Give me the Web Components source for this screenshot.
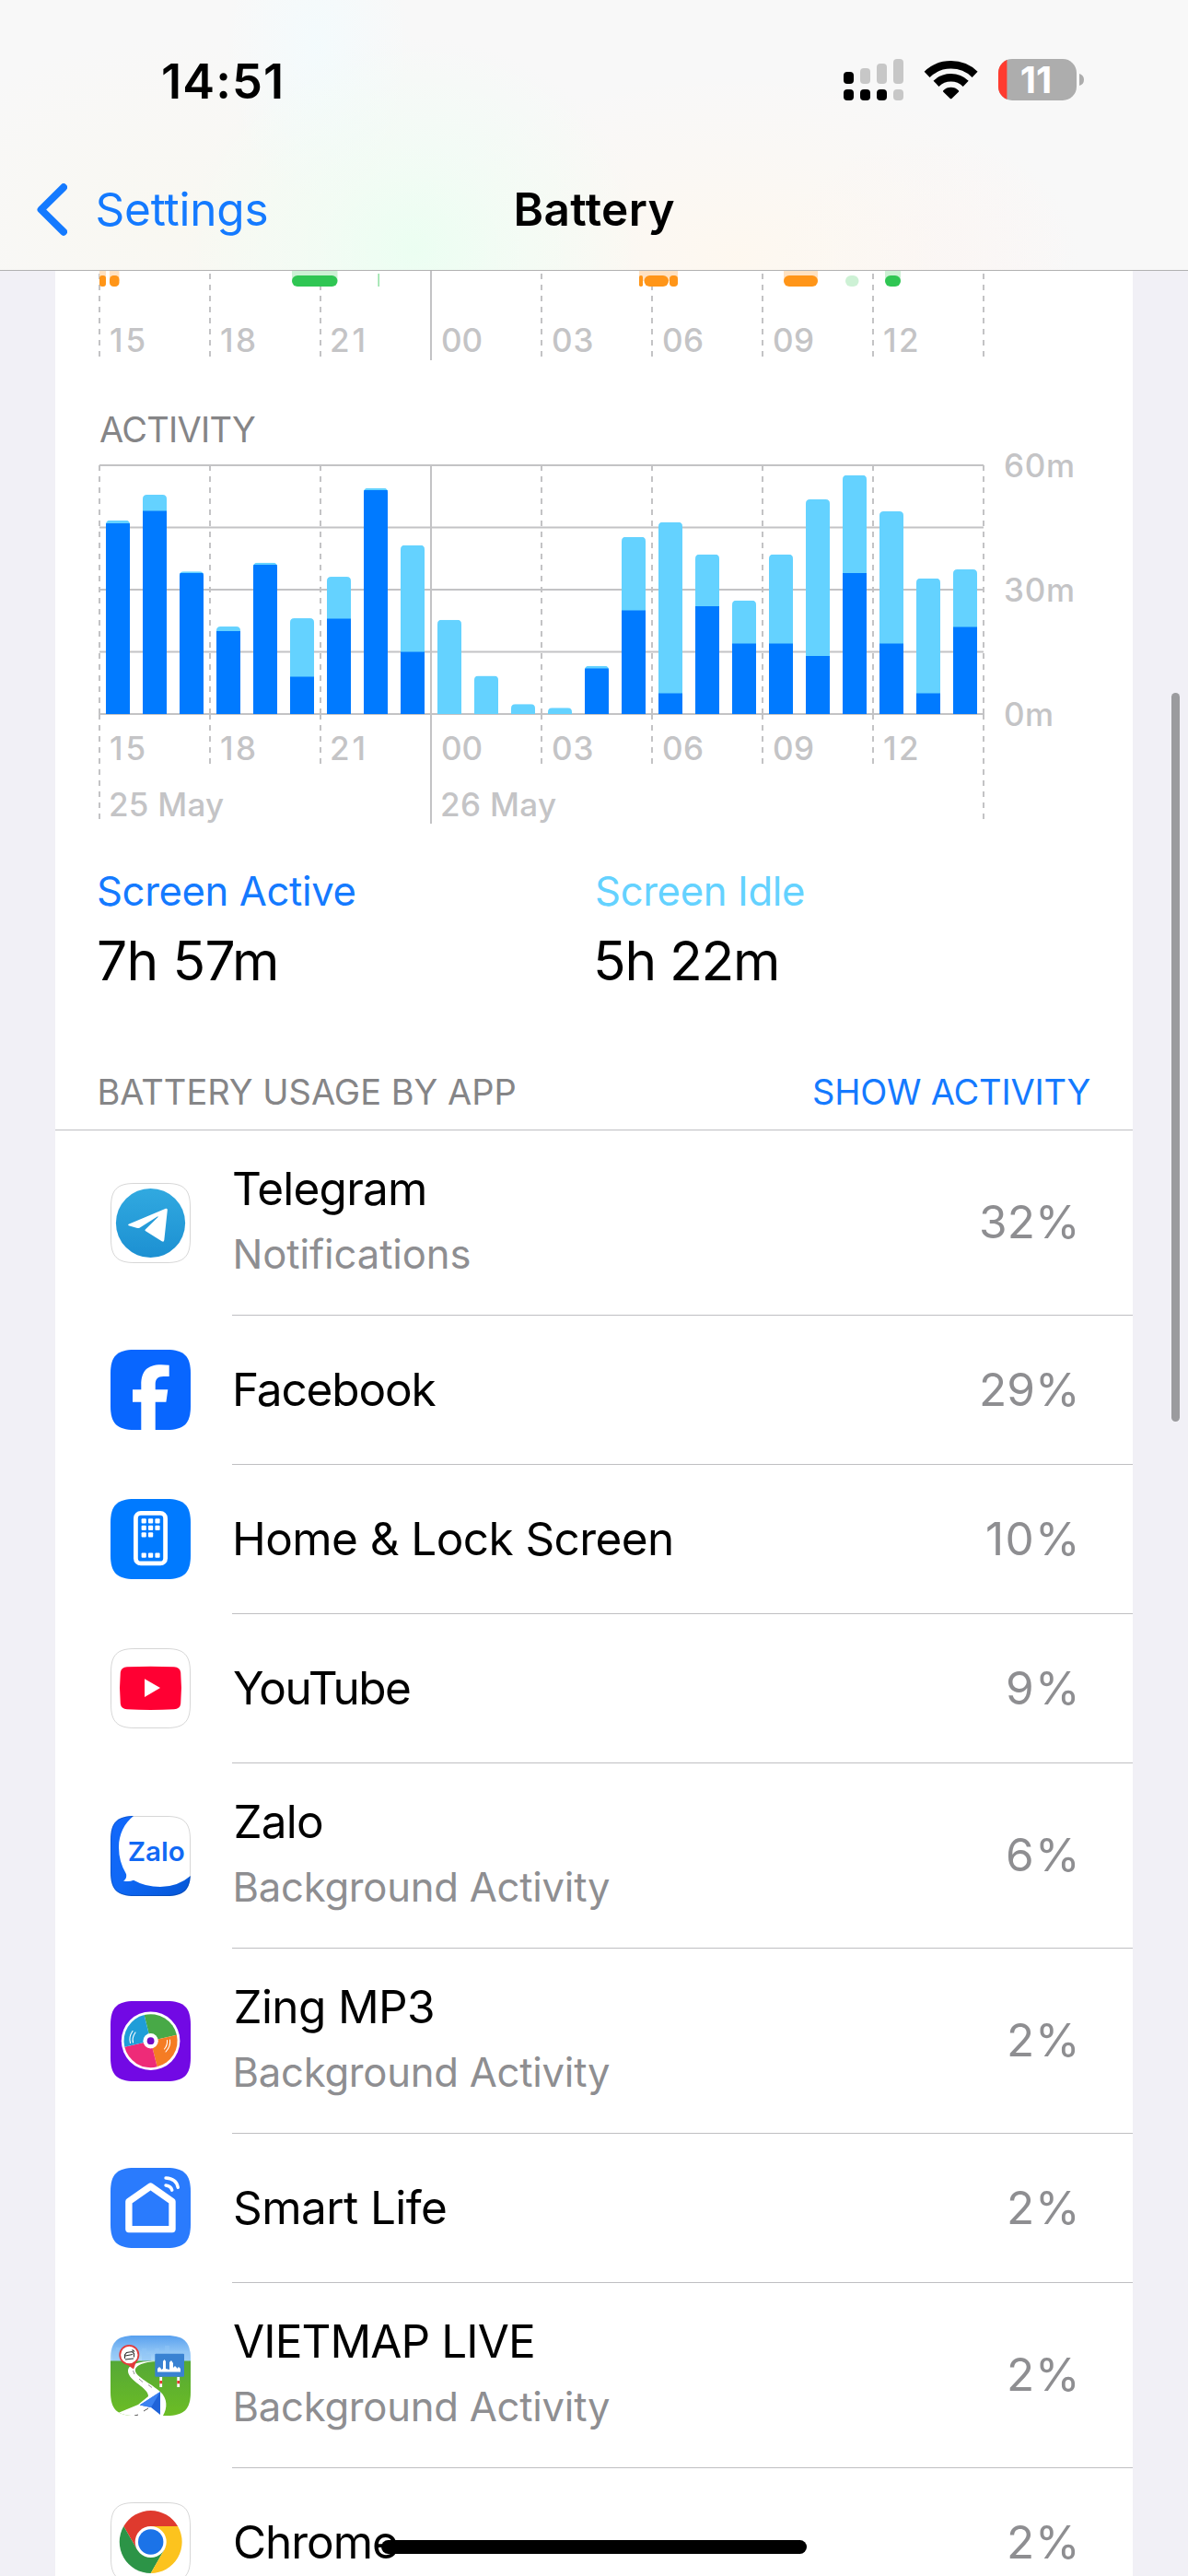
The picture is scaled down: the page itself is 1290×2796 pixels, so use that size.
<!DOCTYPE html>
<html lang="en">
<head>
<meta charset="utf-8">
<title>Battery</title>
<style>
html,body{margin:0;padding:0}
body{width:1290px;height:2796px;overflow:hidden;background:#f1f0f6;font-family:Inter,"Liberation Sans",sans-serif;color:#000}
</style>
</head>
<body>
<battery-screen></battery-screen>
<script>
const FAMILY = 'Inter, "Liberation Sans", sans-serif';
const ctx = document.createElement('canvas').getContext('2d');

// Tracking that makes the visible ink of a string exactly `width` px wide.
function track(text, size, weight, width) {
  ctx.font = `${weight} ${size}px ${FAMILY}`;
  const m = ctx.measureText(text);
  const ink = m.actualBoundingBoxRight + m.actualBoundingBoxLeft;
  const n = [...text].length - 1;
  return {
    spacing: width && n ? (width - ink) / n : 0,
    left: m.actualBoundingBoxLeft,
    right: m.width - m.actualBoundingBoxRight
  };
}

class UiLabel extends HTMLElement {
  connectedCallback() {
    const size = +this.getAttribute('size') || 49.5;
    const weight = this.getAttribute('weight') || 400;
    const line = this.getAttribute('line') || 72;
    const t = track(this.textContent, size, weight, +this.getAttribute('ink'));
    const root = this.shadowRoot || this.attachShadow({mode: 'open'});
    root.innerHTML = `<style>
      :host{display:block;flex:none;white-space:nowrap}
      span{display:block;font-size:${size}px;font-weight:${weight};line-height:${line}px;letter-spacing:${t.spacing}px;
        margin-left:${t.left}px;margin-right:${-t.spacing - t.right}px}
    </style><span><slot></slot></span>`;
  }
}
customElements.define('ui-label', UiLabel);

class StatusBar extends HTMLElement {
  connectedCallback() {
    this.attachShadow({mode: 'open'}).innerHTML = `<style>
      :host{display:flex;align-items:center;justify-content:space-between;height:176px;padding:0 113px 0 177px}
      svg{display:block;overflow:visible;margin-top:-3px}
    </style>
    <ui-label size="52.3" weight="600" ink="128">14:51</ui-label>
    <svg width="262" height="66" viewBox="915 54 262 66">
      <g fill="#c7c7c7"><rect x="934" y="74" width="11" height="17" rx="4"/><rect x="952" y="69" width="11" height="22" rx="4"/><rect x="970" y="64" width="11" height="27" rx="4"/><rect x="970" y="97" width="11" height="12" rx="4"/></g>
      <g><rect x="916" y="78" width="11" height="13" rx="4"/><rect x="916" y="97" width="11" height="12" rx="4"/><rect x="934" y="97" width="11" height="12" rx="4"/><rect x="952" y="97" width="11" height="12" rx="4"/></g>
      <g fill="none" stroke="#000" stroke-width="8.6"><path d="M1006.6 80.8a37.5 37.5 0 0 1 52 0"/><path d="M1016.5 90.8a23.2 23.2 0 0 1 32.2 0"/></g>
      <path d="M1024.3 98.2a12 12 0 0 1 16.6 0q.8.8 0 1.6l-7.2 6.9q-1.1 1-2.2 0l-7.2-6.9q-.8-.8 0-1.6z"/>
      <clipPath id="b"><rect x="1084" y="64" width="85" height="45" rx="15"/></clipPath>
      <g clip-path="url(#b)"><rect x="1084" y="64" width="85" height="45" fill="#adadad"/><rect x="1084" y="64" width="9.4" height="45" fill="#ff3b2f"/></g>
      <path d="M1172 80q5 1.5 5 6.5t-5 6.5z" fill="#adadad"/>
      <text x="1125" y="101" text-anchor="middle" font-size="40" font-weight="700" fill="#fff">11</text>
    </svg>`;
  }
}
customElements.define('status-bar', StatusBar);

class NavBar extends HTMLElement {
  connectedCallback() {
    this.attachShadow({mode: 'open'}).innerHTML = `<style>
      :host{display:grid;grid-template-columns:1fr auto 1fr;align-items:center;height:102px;padding:0 38px 15px 40px;border-bottom:1px solid #b1b1b1}
      .back{display:flex;align-items:center;gap:32.5px;color:#147aff}
      svg{display:block}
      .title{padding-left:1px}
    </style>
    <div class="back"><svg width="33" height="57" viewBox="0 0 33 57"><path d="M29 4.3 4.6 28.5 29 52.7" fill="none" stroke="#147aff" stroke-width="8" stroke-linecap="round" stroke-linejoin="round"/></svg><ui-label ink="184">Settings</ui-label></div>
    <ui-label class="title" weight="600" ink="172">Battery</ui-label>`;
  }
}
customElements.define('nav-bar', NavBar);

const X0 = 48, STEP = 120, HOURS = ['15','18','21','00','03','06','09','12'];
const GREY = '#c3c3c5';
function axisText(s, x, y, ink) {
  const t = track(s, 35, 500, ink);
  return `<text x="${x + t.left}" y="${y}" font-size="35" font-weight="500" fill="#c4c4c6" letter-spacing="${t.spacing}">${s}</text>`;
}
const vline = (x, a, b, solid) => `<path d="M${x} ${a}V${b}" stroke="${GREY}" stroke-width="2"${solid ? '' : ' stroke-dasharray="6 6"'}/>`;
const INKS = {'15':36.5,'18':37,'21':34.5,'00':42.5,'03':42.5,'06':43,'09':43,'12':36};

// Lower edge of the battery-level chart: charging pills and hour labels.
class LevelChart extends HTMLElement {
  connectedCallback() {
    let s = '';
    for (let i = 0; i < 9; i++) s += i === 3 ? vline(X0 + STEP*i, 0, 97, true) : vline(X0 + STEP*i, 3, 93);
    const o = '#ff9518', g = '#2fc653', po = '#ffe2c2', pg = '#cdf1d5';
    const shade = [[48,7,po],[59,10.5,po],[257,49.5,pg],[634,42,po],[791,37,po],[901,17,pg]];
    const pill = [[48,7,o],[59,10.5,o],[257,49.5,g],[634,4,o],[639.5,26.5,o],[667,9,o],[791,37,o],[858,14.5,pg],[901,17,g]];
    for (const [x,w,c] of shade) s += `<rect x="${x}" y="0" width="${w}" height="11" fill="${c}"/>`;
    for (const [x,w,c] of pill) s += `<rect x="${x}" y="5" width="${w}" height="12" rx="${Math.min(6,w/2.4)}" fill="${c}"/>`;
    s += `<rect x="350.5" y="3" width="1.3" height="14" fill="#7fdc95"/>`;
    HOURS.forEach((h,i) => s += axisText(h, X0 + STEP*i + 12, 87.6, INKS[h]));
    this.attachShadow({mode:'open'}).innerHTML = `<style>:host{display:block;height:97px}svg{display:block}</style><svg width="1170" height="97">${s}</svg>`;
  }
}
customElements.define('level-chart', LevelChart);

// Minutes per hour: [screen on + idle, screen on]
const ACTIVITY = [[46.7,46],[52.9,49],[34.4,34],[21.1,20],[36.5,36],[23.1,9],[33.1,23],[54.5,54],[40.7,15],[22.7,0],[9.2,0],[2.4,0],[1.5,0],[11.6,11],[42.7,25],[46.3,5],[38.5,26],[27.4,17],[38.5,17],[51.8,14],[57.6,34],[48.9,17],[32.7,5],[34.9,21]];
class ActivityChart extends HTMLElement {
  connectedCallback() {
    const top = 16, base = 286, px = 4.5;
    let s = '';
    for (let i = 0; i < 5; i++) s += `<path d="M48 ${top + 67.5*i}H1008" stroke="${GREY}" stroke-width="1.8"/>`;
    for (let i = 0; i < 9; i++) {
      const x = X0 + STEP*i;
      s += i === 3 ? vline(x, top, 405, true) : vline(x, top, base) + vline(x, base, i % 8 ? 341 : 401);
    }
    ACTIVITY.forEach(([t,a],i) => {
      const x = 55 + 40*i, h = t*px, r = Math.min(4.5, h), y = base - h;
      s += `<clipPath id="c${i}"><path d="M${x} ${base}V${y+r}q0 ${-r} ${r} ${-r}h${26-2*r}q${r} 0 ${r} ${r}V${base}z"/></clipPath>
        <g clip-path="url(#c${i})"><rect x="${x}" y="${y}" width="26" height="${h}" fill="#64d2ff"/><rect x="${x}" y="${base-a*px}" width="26" height="${a*px}" fill="#007aff"/></g>`;
    });
    HOURS.forEach((h,i) => s += axisText(h, X0 + STEP*i + 12, 335.8, INKS[h]));
    s += axisText('25 May', 60, 397, 123) + axisText('26 May', 420, 397, 124);
    s += axisText('60m', 1031, 29, 74) + axisText('30m', 1031, 164, 74) + axisText('0m', 1031, 299, 51);
    this.attachShadow({mode:'open'}).innerHTML = `<style>:host{display:flow-root;height:407px}svg{display:block;overflow:visible;margin-top:-16px}</style><svg width="1170" height="423" viewBox="0 -16 1170 423">${s}</svg>`;
  }
}
customElements.define('activity-chart', ActivityChart);

const tile = c => `<rect width="87" height="87" fill="${c}"/>`;
const ICONS = {
telegram: [1, `${tile('#fff')}<linearGradient id="tg" x2="0" y2="1"><stop stop-color="#31a9e0"/><stop offset="1" stop-color="#1c90d2"/></linearGradient><circle cx="43.5" cy="43.5" r="37.6" fill="url(#tg)"/>
 <path d="M19.6 44.8 60 27.8q2-.6 1.8 1.6L58.3 62q-.4 2.6-2.6 1.2L37.8 52q-.8-.7 0-1.4L51.6 37q.4-1-.8-.6L31.5 48.7q-1.2.6-2.4.3l-9.4-2.8q-1.2-.6-.1-1.4z" fill="#fff"/>`],
facebook: [0, `${tile('#0866ff')}<path d="M33.3 87V56.7H24V43.3h9.3V38c0-16.500 8-24.200 30.400-21.200V29H57.500c-6.500 0-8.800 3-8.800 8.800v5.500h13.600L60.400 56.700H48.700V87z" fill="#fff"/>`],
home: [0, `${tile('#007aff')}<rect x="27.400" y="15.400" width="32.200" height="54.500" rx="5.500" fill="none" stroke="#fff" stroke-width="4.800"/><g fill="#fff">${
 [[0,21.3],[1,21.3],[2,21.3],[0,28.8],[1,28.8],[2,28.8],[0,36.3],[1,36.3],[0,58.6],[1,58.6],[2,58.6]].map(([c,y]) => `<rect x="${33.6+7.4*c}" y="${y}" width="5.200" height="5.200" rx="1"/>`).join('')}</g>`],
youtube: [1, `${tile('#fff')}<path d="M18 20.300q25.500-1.300 51 0 6.500.3 7.200 6 1.600 17 0 34-.7 5.700-7.200 6-25.500 1.300-51 0-6.500-.3-7.200-6-1.600-17 0-34 .7-5.700 7.200-6z" fill="#f03"/><path d="M37 33.300v19.700L54 43.100z" fill="#fff"/>`],
zalo: [1, `${tile('#fff')}<linearGradient id="za" x2="1" y2="1"><stop stop-color="#1268fb"/><stop offset=".5" stop-color="#0f68f5"/><stop offset="1" stop-color="#0455d4"/></linearGradient>
 <path d="M0 0H25C15 8 9 20 9 34q0 16 8 29 1 5-3 7.500 6 1.500 11-.8Q38 77 54 77 73 77 87 65V87H0z" fill="url(#za)"/><text x="18.800" y="49.400" font-size="29" font-weight="600" fill="#1169f4" textLength="62" lengthAdjust="spacingAndGlyphs">Zalo</text>`],
zing: [0, `${tile('#7209e4')}<circle cx="43.600" cy="43.200" r="31.800" fill="#fff"/>
 <path d="M43.600 43.200 36.600 15A29 29 0 0 1 71.900 36.700z" fill="#48a947"/><path d="M43.600 43.200 71.900 36.700A29 29 0 0 1 50.600 71.300z" fill="#f57c24"/>
 <path d="M43.600 43.200 50.600 71.300A29 29 0 0 1 15.300 49.700z" fill="#ee2b78"/><path d="M43.600 43.200 15.300 49.700A29 29 0 0 1 36.600 15z" fill="#1f9dd8"/>
 <g fill="none" stroke="#fff" stroke-width="1.100" stroke-linecap="round"><path d="M24 32.500q-4.500 6.500-2.500 13M27 34q-4 6-2.500 11M64.500 42q1 7-4.500 13M61.500 42.500q.5 5.500-3 9.500"/></g>
 <circle cx="43.600" cy="43.200" r="8.200" fill="#fff"/><circle cx="43.600" cy="43.200" r="3.900" fill="#7209c4"/>`],
smart: [0, `${tile('#2a7bfd')}<g fill="none" stroke="#fff" stroke-linecap="round" stroke-linejoin="round"><path d="M43.500 20 67 36.500V66.600H19.900V36.500z" stroke-width="7.400"/><path d="M60 19q5.500.5 6.800 5.200M60 11Q71.500 11.500 73.300 21.400" stroke-width="3.400"/></g>`],
vietmap: [0, `<linearGradient id="sk" x2="0" y2="1"><stop stop-color="#58a0ef"/><stop offset="1" stop-color="#b0daf8"/></linearGradient><linearGradient id="gr" x2="0" y2="1"><stop stop-color="#55a836"/><stop offset="1" stop-color="#6cbd24"/></linearGradient>
 <rect width="87" height="28" fill="url(#sk)"/><path d="M2 28V18h4v-5h5v15zm32 0V14h5v6h5v8zM48 28V14h5v5h6v-8h5v17zm32 0V17h7v11z" fill="#8fc4f5" opacity=".55"/><rect y="27.500" width="87" height="60" fill="url(#gr)"/>
 <path d="M48 27.500C35 28 19 30 19 38.500 19 49 42 57 41 66L30 75 7 84.500 13 87H57C62 79 62 68 54 61 44 52 28 45 27 38.500 26 32 38 28.600 48 28.300z" fill="#fff"/>
 <path d="M24.500 38 26 42M31 47l4 3.500M41 53.500l4 3" stroke="#777" stroke-width=".8"/><path d="M36 82l5-3M26 87l4-1" stroke="#555" stroke-width="1"/>
 <rect x="48.300" y="19.700" width="31.700" height="25" rx="1" fill="#3982d2"/><path d="M51 39.500V36l2-2 2 2v1l2-1v-8l1.500-2 1.500 2v8l4 1V29l2-2 2 3v5l2-2 2 2v1l2-2 2 2v3.500z" fill="#fff"/>
 <path d="M54.700 45V56M73.700 45V56" stroke="#fff" stroke-width="2.800"/><path d="M54.700 49v3.200M73.700 49v3.200" stroke="#e43c33" stroke-width="2.800"/>
 <path d="M13 28 25 36.500 28 28z" fill="#e23b3b"/><circle cx="20.300" cy="21" r="11" fill="#e23b3b"/><circle cx="20.300" cy="21" r="9.200" fill="#fff"/><path d="M15.500 25v-4l2-2.500 6-1 2 2v4M16 22l8-1.500M16 26l9-1M23.500 15.500l2.500 2" stroke="#333" stroke-width="1.100" fill="none"/>
 <path d="M54 61V86L44 78 31.700 75.500z" fill="#1f63d8"/><path d="M54 61 44 78 31.700 75.500z" fill="#3b82f0"/>`],
chrome: [1, `${tile('#fff')}<path d="M14.300 26A34 34 0 0 1 73.100 26H43.700L29 51.500z" fill="#df3a2e"/><path d="M14.300 26 29 51.500H58.400L43.700 77A34 34 0 0 1 14.300 26z" fill="#2c9447"/><path d="M73.100 26A34 34 0 0 1 43.700 77L58.400 51.500 43.700 26z" fill="#fcc31e"/><circle cx="43.700" cy="43" r="17" fill="#fff"/><circle cx="43.700" cy="43" r="13.700" fill="#1b73e8"/>`]
};
class AppIcon extends HTMLElement {
  connectedCallback() {
    const [edge, art] = ICONS[this.getAttribute('name')];
    this.attachShadow({mode:'open'}).innerHTML = `<style>:host{display:block;flex:none;width:87px;height:87px}svg{display:block}</style>
    <svg width="87" height="87" viewBox="0 0 87 87"><clipPath id="m"><path d="M0 26C0 7 7 0 26 0H61C80 0 87 7 87 26V61C87 80 80 87 61 87H26C7 87 0 80 0 61z"/></clipPath><g clip-path="url(#m)">${art}</g>${
    edge ? '<path d="M.5 26C.5 7.300 7.300.5 26 .5H61C79.700.5 86.500 7.300 86.500 26V61C86.500 79.700 79.700 86.500 61 86.500H26C7.300 86.500.5 79.700.5 61z" fill="none" stroke="#000" stroke-opacity=".16"/>' : ''}</svg>`;
  }
}
customElements.define('app-icon', AppIcon);

class AppRow extends HTMLElement {
  connectedCallback() {
    const a = n => this.getAttribute(n);
    const sub = a('detail');
    this.attachShadow({mode:'open'}).innerHTML = `<style>
      :host{display:flex;align-items:center;height:${sub ? 201 : 162}px;padding-left:60px}
      app-icon{margin-bottom:${sub ? 0 : 1}px}
      .body{flex:1;display:flex;align-items:center;justify-content:space-between;box-sizing:border-box;height:100%;margin-left:45px;padding:0 62px 2px 0;border-bottom:1px solid #bfbfc2}
      .text{padding-left:${a('inset') || 3}px}
      .sub{color:#8e8e91;margin-left:${3.5 - (a('inset') || 3)}px}
      .pct{color:#8e8e91}
    </style>
    <app-icon name="${a('icon')}"></app-icon>
    <div class="body"><div class="text"><ui-label ink="${a('ink')}">${a('name').replace('&','&amp;')}</ui-label>${
      sub ? `<ui-label class="sub" size="43.6" ink="${sub === 'Notifications' ? 254 : 406.5}">${sub}</ui-label>` : ''}</div>
    <ui-label class="pct" ink="${a('pink')}">${a('pct')}</ui-label></div>`;
  }
}
customElements.define('app-row', AppRow);

class BatteryScreen extends HTMLElement {
  connectedCallback() {
    const rows = [
      ['telegram','Telegram',207,2,'32%',102,'Notifications'],['facebook','Facebook',217.5,4,'29%',102],['home','Home & Lock Screen',473,4,'10%',96],
      ['youtube','YouTube',191,2,'9%',74],['zalo','Zalo',94.5,3.5,'6%',74,'Background Activity'],['zing','Zing MP3',214.5,3.5,'2%',72],
      ['smart','Smart Life',229,3,'2%',72],['vietmap','VIETMAP LIVE',325,2,'2%',72,'Background Activity'],['chrome','Chrome',176,3,'2%',72]
    ].map(([i,n,k,s,p,pk,d]) => `<app-row icon="${i}" name="${n.replace('&','&amp;')}" ink="${k}" inset="${s}" pct="${p}" pink="${pk}"${d || i === 'zing' ? ` detail="${d || 'Background Activity'}"` : ''}></app-row>`).join('');
    this.attachShadow({mode:'open'}).innerHTML = `<style>
      :host{display:block;position:relative;width:1290px;height:2796px;overflow:hidden;background:#f1f0f6}
      header{background:
        radial-gradient(ellipse 250px 230px at 450px 270px,rgba(234,255,241,.9),rgba(238,254,243,.6) 40%,rgba(244,251,246,0)),
        radial-gradient(ellipse 380px 200px at 800px 280px,rgba(254,248,239,.95),rgba(252,248,242,.55) 55%,rgba(249,248,246,0)),
        radial-gradient(ellipse 100px 170px at 345px 50px,rgba(243,251,253,.9),rgba(246,250,251,0)),
        radial-gradient(ellipse 160px 130px at 1010px 280px,rgba(250,244,246,.9),rgba(249,247,248,0)),
        radial-gradient(ellipse 320px 210px at 190px 250px,rgba(249,248,241,.95),rgba(249,248,245,0)),#f8f8f8}
      main{margin:0 60px;background:#fff}
      .cap{color:#858587}
      .activity{padding:52px 0 0 48px}
      .stats{display:grid;grid-template-columns:540px 1fr;row-gap:15px;padding:44px 0 0 47px}
      .stats .b{padding-left:1px}
      .on{color:#147aff}.idle{color:#64d2ff}
      .head{display:flex;justify-content:space-between;padding:87px 46.5px 18px 48.5px;border-bottom:1px solid #bfbfc2}
      .scroll,.home{position:absolute;border-radius:8px}
      .scroll{left:1272px;top:752px;width:9px;height:791px;background:#9b9b9e}
      .home{left:414px;top:2757px;width:462px;height:15px;background:#000}
    </style>
    <header><status-bar></status-bar><nav-bar></nav-bar></header>
    <main>
      <level-chart></level-chart>
      <ui-label class="cap activity" size="38" line="46" ink="169">ACTIVITY</ui-label>
      <activity-chart></activity-chart>
      <section class="stats">
        <ui-label class="on" size="43.6" line="56" ink="278.5">Screen Active</ui-label><ui-label class="idle b" size="43.6" line="56" ink="225">Screen Idle</ui-label>
        <ui-label size="58.7" line="64" ink="192">7h 57m</ui-label><ui-label class="b" size="58.7" line="64" ink="195">5h 22m</ui-label>
      </section>
      <div class="head"><ui-label class="cap" size="38" line="46" ink="451">BATTERY USAGE BY APP</ui-label><ui-label class="on" size="38" line="46" ink="299.5">SHOW ACTIVITY</ui-label></div>
      <section>${rows}</section>
    </main>
    <div class="scroll"></div><div class="home"></div>`;
  }
}
customElements.define('battery-screen', BatteryScreen);
</script>
</body>
</html>
